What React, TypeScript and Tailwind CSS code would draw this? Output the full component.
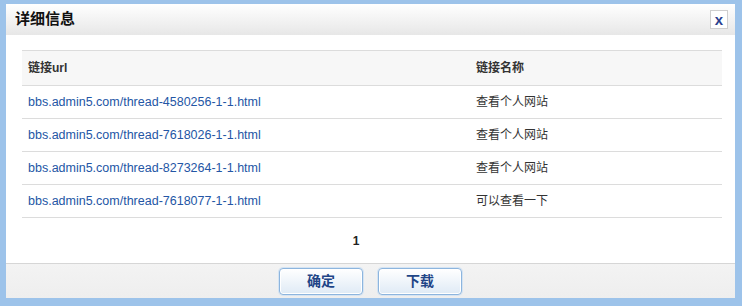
import * as React from "react";

const rows = [
  { url: "bbs.admin5.com/thread-4580256-1-1.html", name: "查看个人网站" },
  { url: "bbs.admin5.com/thread-7618026-1-1.html", name: "查看个人网站" },
  { url: "bbs.admin5.com/thread-8273264-1-1.html", name: "查看个人网站" },
  { url: "bbs.admin5.com/thread-7618077-1-1.html", name: "可以查看一下" },
];

const font = {
  fontFamily: '"Liberation Sans", Arial, "Noto Sans CJK SC", sans-serif',
};

export default function App() {
  return (
    <div
      className="w-[742px] h-[306px] bg-[#9dc3ea] pt-[4px] pl-[6px] pr-[7px] pb-[8px]"
      style={font}
    >
      <div className="flex h-full flex-col bg-white">
        {/* ── title bar ── */}
        <div className="flex h-[31px] shrink-0 items-center justify-between bg-gradient-to-b from-white to-[#e7e7e7] pl-[9px] pr-[7px]">
          <span className="text-[15px] font-bold text-[#111]">详细信息</span>
          <button
            type="button"
            className="flex h-[19px] w-[18px] items-center justify-center border border-[#cfcfcf] bg-white text-[15px] font-bold leading-none text-[#2b3f8f]"
          >
            x
          </button>
        </div>

        {/* ── content ── */}
        <div className="flex h-[228px] shrink-0 flex-col pl-[16px] pr-[13px] pt-[15px]">
          <div className="border-t border-[#dcdcdc]">
            <div className="grid h-[35px] grid-cols-[454px_1fr] items-center border-b border-[#dcdcdc] bg-[#f7f7f7] text-[12px] font-bold text-[#333]">
              <span className="pl-[6px]">链接url</span>
              <span>链接名称</span>
            </div>
            {rows.map((r) => (
              <div
                key={r.url}
                className="grid h-[33px] grid-cols-[454px_1fr] items-center border-b border-[#dcdcdc] text-[12px]"
              >
                <a href="#" className="pl-[6px] text-[12.5px] text-[#2456a5]">
                  {r.url}
                </a>
                <span className="text-[#333]">{r.name}</span>
              </div>
            ))}
          </div>
          <div className="flex flex-1 items-center justify-center pr-[32px] text-[12px] font-bold text-[#222]">
            1
          </div>
        </div>

        {/* ── footer ── */}
        <div className="flex flex-1 justify-center gap-[15px] border-t border-[#d6d6d6] bg-gradient-to-b from-[#f3f3f3] to-[#eeeeee] pt-[4px]">
          {["确定", "下载"].map((t) => (
            <button
              key={t}
              type="button"
              className="h-[27px] w-[84px] rounded-[4px] border border-[#8db5de] bg-gradient-to-b from-white to-[#dfeaf5] text-[14px] font-bold text-[#1f4587] shadow-[inset_0_0_0_1px_#ffffff,0_0_0_1px_#d5e4f3]"
            >
              {t}
            </button>
          ))}
        </div>
      </div>
    </div>
  );
}
